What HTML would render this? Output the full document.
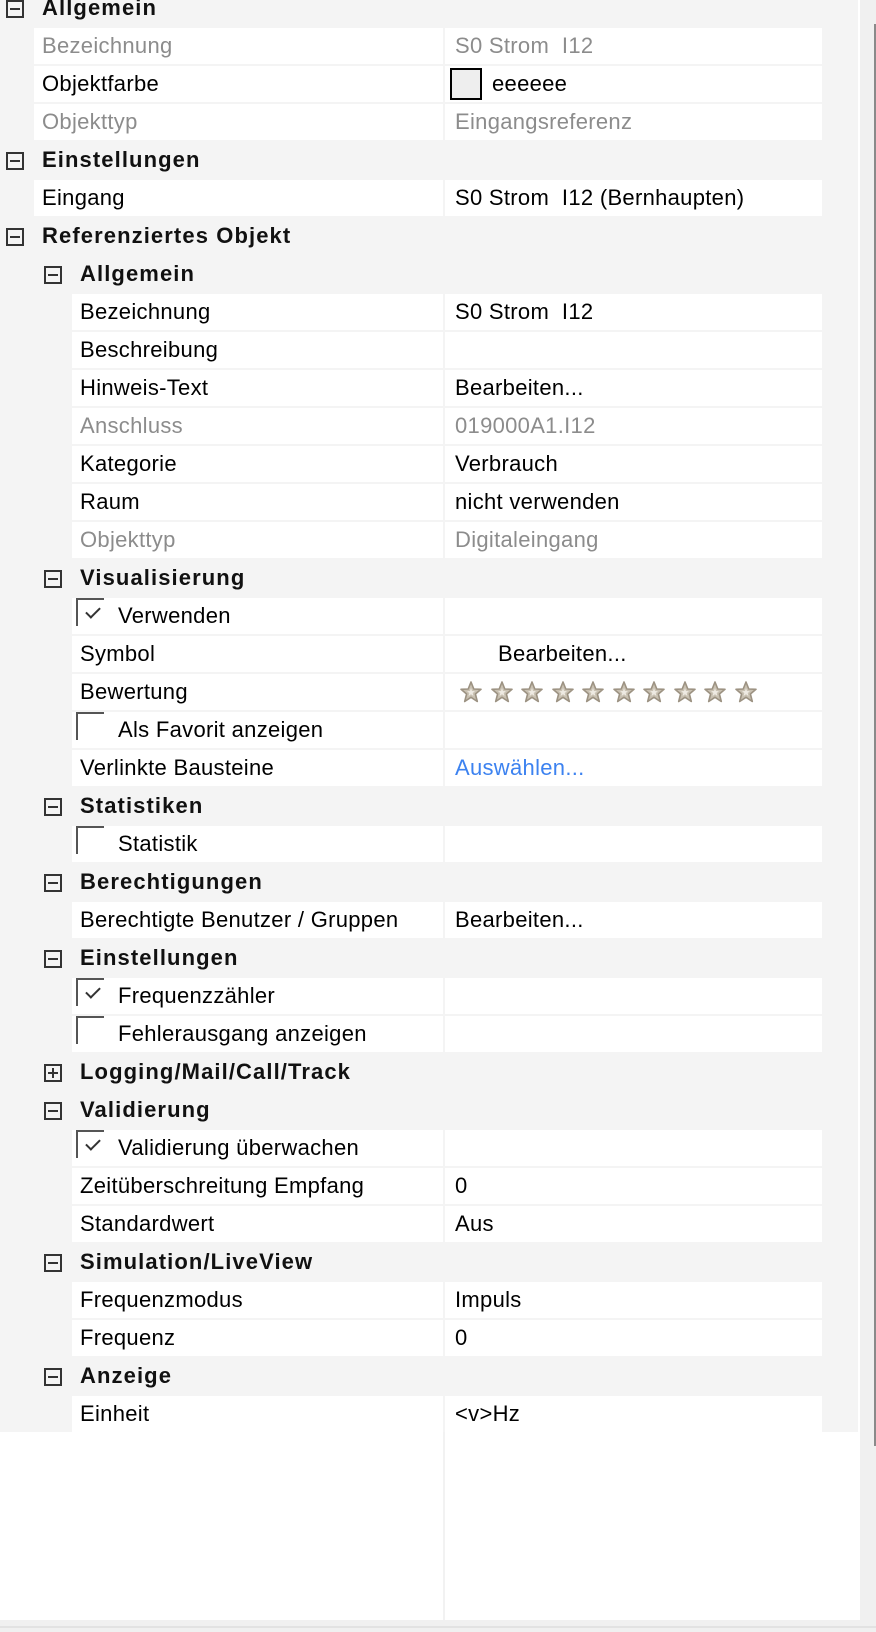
<!DOCTYPE html>
<html><head><meta charset="utf-8"><style>
*{margin:0;padding:0;box-sizing:border-box}
body{width:876px;height:1632px;overflow:hidden;background:#fff;font-family:"Liberation Sans",sans-serif;font-size:22px;letter-spacing:0.3px;color:#000;position:relative}
#grid{position:absolute;left:0;top:0;width:858px;height:1432px;background:#f4f4f4;overflow:hidden}
.rows{position:absolute;left:0;top:-10px;width:858px}
.r{position:relative;height:36px;margin-bottom:2px}
.h{font-weight:bold;color:#111;letter-spacing:1.1px}
.h span.t{position:absolute;top:5px;white-space:pre}
.box{position:absolute;top:10px;width:18px;height:18px;border:2px solid #333}
.box:after{content:"";position:absolute;left:2px;right:2px;top:6px;height:2px;background:#333}
.box.p:before{content:"";position:absolute;top:2px;bottom:2px;left:6px;width:2px;background:#333}
.lab{position:absolute;top:0;height:36px;right:415px;background:#fff}
.val{position:absolute;top:0;height:36px;left:445px;width:377px;background:#fff}
.lab span,.val span{position:absolute;top:5px;white-space:pre}
.val span{left:10px}
.g{color:#8c8c8c}
.cb{position:absolute;top:0;left:4px;width:28px;height:28px;border-left:2px solid #555;border-top:2px solid #555}
.cb.c:after{content:"";position:absolute;left:8px;top:7px;width:12px;height:6px;border-left:2px solid #333;border-bottom:2px solid #333;transform:rotate(-45deg)}
.stars{position:absolute;left:14px;top:6px;height:24px}
.stars i{display:inline-block;width:30.5px;height:24px}
#vline{position:absolute;left:443px;top:1432px;width:2px;height:188px;background:#f2f2f2}
#sb{position:absolute;left:860px;top:0;width:16px;height:1620px;background:#f0f0f0}
#thumb{position:absolute;left:874px;top:24px;width:2px;height:1422px;background:#8a8a8a}
#bot{position:absolute;left:0;top:1620px;width:876px;height:12px;background:#f0f0f0;border-top:6px solid #f0f0f0}
#bot:after{content:"";position:absolute;left:0;right:0;top:0;height:2px;background:#e2e2e2}
</style></head><body>
<svg width="0" height="0" style="position:absolute"><defs><symbol id="st" viewBox="0 0 24 24"><path d="M12 2 L14.8 9 L22 9.3 L16.4 14 L18.3 21.5 L12 17.3 L5.7 21.5 L7.6 14 L2 9.3 L9.2 9 Z" fill="#c9c1b2" stroke="#9c9282" stroke-width="1.6" stroke-linejoin="round"/><path d="M12 8 L13 11 L16 11.2 L13.7 13 L14.4 16 L12 14.3 L9.6 16 L10.3 13 L8 11.2 L11 11 Z" fill="#eeeae2"/></symbol></defs></svg>
<div id="grid"><div class="rows">

<div class="r h"><div class="box" style="left:6px"></div><span class="t" style="left:42px">Allgemein</span></div>
<div class="r"><div class="lab" style="left:34px"><span class="g" style="left:8px">Bezeichnung</span></div><div class="val"><span class="g">S0 Strom  I12</span></div></div>
<div class="r"><div class="lab" style="left:34px"><span style="left:8px">Objektfarbe</span></div><div class="val"><div style="position:absolute;left:5px;top:2px;width:32px;height:32px;background:#eee;border:2px solid #000"></div><span style="left:47px">eeeeee</span></div></div>
<div class="r"><div class="lab" style="left:34px"><span class="g" style="left:8px">Objekttyp</span></div><div class="val"><span class="g">Eingangsreferenz</span></div></div>
<div class="r h"><div class="box" style="left:6px"></div><span class="t" style="left:42px">Einstellungen</span></div>
<div class="r"><div class="lab" style="left:34px"><span style="left:8px">Eingang</span></div><div class="val"><span>S0 Strom  I12 (Bernhaupten)</span></div></div>
<div class="r h"><div class="box" style="left:6px"></div><span class="t" style="left:42px">Referenziertes Objekt</span></div>

<div class="r h"><div class="box" style="left:44px"></div><span class="t" style="left:80px">Allgemein</span></div>
<div class="r"><div class="lab" style="left:72px"><span style="left:8px">Bezeichnung</span></div><div class="val"><span>S0 Strom  I12</span></div></div>
<div class="r"><div class="lab" style="left:72px"><span style="left:8px">Beschreibung</span></div><div class="val"></div></div>
<div class="r"><div class="lab" style="left:72px"><span style="left:8px">Hinweis-Text</span></div><div class="val"><span>Bearbeiten...</span></div></div>
<div class="r"><div class="lab" style="left:72px"><span class="g" style="left:8px">Anschluss</span></div><div class="val"><span class="g">019000A1.I12</span></div></div>
<div class="r"><div class="lab" style="left:72px"><span style="left:8px">Kategorie</span></div><div class="val"><span>Verbrauch</span></div></div>
<div class="r"><div class="lab" style="left:72px"><span style="left:8px">Raum</span></div><div class="val"><span>nicht verwenden</span></div></div>
<div class="r"><div class="lab" style="left:72px"><span class="g" style="left:8px">Objekttyp</span></div><div class="val"><span class="g">Digitaleingang</span></div></div>

<div class="r h"><div class="box" style="left:44px"></div><span class="t" style="left:80px">Visualisierung</span></div>
<div class="r"><div class="lab" style="left:72px"><div class="cb c"></div><span style="left:46px">Verwenden</span></div><div class="val"></div></div>
<div class="r"><div class="lab" style="left:72px"><span style="left:8px">Symbol</span></div><div class="val"><span style="left:53px">Bearbeiten...</span></div></div>
<div class="r"><div class="lab" style="left:72px"><span style="left:8px">Bewertung</span></div><div class="val"><div class="stars"><i><svg width="24" height="24"><use href="#st"/></svg></i><i><svg width="24" height="24"><use href="#st"/></svg></i><i><svg width="24" height="24"><use href="#st"/></svg></i><i><svg width="24" height="24"><use href="#st"/></svg></i><i><svg width="24" height="24"><use href="#st"/></svg></i><i><svg width="24" height="24"><use href="#st"/></svg></i><i><svg width="24" height="24"><use href="#st"/></svg></i><i><svg width="24" height="24"><use href="#st"/></svg></i><i><svg width="24" height="24"><use href="#st"/></svg></i><i><svg width="24" height="24"><use href="#st"/></svg></i></div></div></div>
<div class="r"><div class="lab" style="left:72px"><div class="cb"></div><span style="left:46px">Als Favorit anzeigen</span></div><div class="val"></div></div>
<div class="r"><div class="lab" style="left:72px"><span style="left:8px">Verlinkte Bausteine</span></div><div class="val"><span style="color:#3c82f0">Auswählen...</span></div></div>

<div class="r h"><div class="box" style="left:44px"></div><span class="t" style="left:80px">Statistiken</span></div>
<div class="r"><div class="lab" style="left:72px"><div class="cb"></div><span style="left:46px">Statistik</span></div><div class="val"></div></div>
<div class="r h"><div class="box" style="left:44px"></div><span class="t" style="left:80px">Berechtigungen</span></div>
<div class="r"><div class="lab" style="left:72px"><span style="left:8px">Berechtigte Benutzer / Gruppen</span></div><div class="val"><span>Bearbeiten...</span></div></div>
<div class="r h"><div class="box" style="left:44px"></div><span class="t" style="left:80px">Einstellungen</span></div>
<div class="r"><div class="lab" style="left:72px"><div class="cb c"></div><span style="left:46px">Frequenzzähler</span></div><div class="val"></div></div>
<div class="r"><div class="lab" style="left:72px"><div class="cb"></div><span style="left:46px">Fehlerausgang anzeigen</span></div><div class="val"></div></div>
<div class="r h"><div class="box p" style="left:44px"></div><span class="t" style="left:80px">Logging/Mail/Call/Track</span></div>
<div class="r h"><div class="box" style="left:44px"></div><span class="t" style="left:80px">Validierung</span></div>
<div class="r"><div class="lab" style="left:72px"><div class="cb c"></div><span style="left:46px">Validierung überwachen</span></div><div class="val"></div></div>
<div class="r"><div class="lab" style="left:72px"><span style="left:8px">Zeitüberschreitung Empfang</span></div><div class="val"><span>0</span></div></div>
<div class="r"><div class="lab" style="left:72px"><span style="left:8px">Standardwert</span></div><div class="val"><span>Aus</span></div></div>
<div class="r h"><div class="box" style="left:44px"></div><span class="t" style="left:80px">Simulation/LiveView</span></div>
<div class="r"><div class="lab" style="left:72px"><span style="left:8px">Frequenzmodus</span></div><div class="val"><span>Impuls</span></div></div>
<div class="r"><div class="lab" style="left:72px"><span style="left:8px">Frequenz</span></div><div class="val"><span>0</span></div></div>
<div class="r h"><div class="box" style="left:44px"></div><span class="t" style="left:80px">Anzeige</span></div>
<div class="r"><div class="lab" style="left:72px"><span style="left:8px">Einheit</span></div><div class="val"><span>&lt;v&gt;Hz</span></div></div>

</div></div>
<div id="vline"></div>
<div id="sb"></div>
<div id="thumb"></div>
<div id="bot"></div>
</body></html>
